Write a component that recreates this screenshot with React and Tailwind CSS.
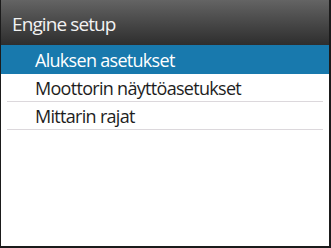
export default function App() {
  const items = ['Aluksen asetukset', 'Moottorin näyttöasetukset', 'Mittarin rajat'];

  return (
    <div className="w-[331px] h-[248px] bg-[#1b1b1b] pl-px pr-[2px] pb-[2px] font-['Open_Sans',sans-serif]">
      <div className="flex h-full flex-col bg-white">
        <div className="flex h-[45px] items-center bg-gradient-to-b from-[#646464] to-[#2e2e2e] pl-[11px] pt-[3px] text-[19px] font-medium tracking-[-0.9px] text-[#f2f2f2]">
          Engine setup
        </div>
        {items.map((label, i) => (
          <div key={label} className={i === 0 ? 'bg-[#1879ad]' : 'px-[6px]'}>
            <div
              className={
                i === 0
                  ? 'flex h-[29px] items-center pl-[34px] pt-[2px] text-[18px] font-medium tracking-[-0.7px] text-white'
                  : 'flex h-[28px] items-center border-b border-[#dcd8dc] pl-[28px] pt-[2px] text-[18px] font-medium tracking-[-0.7px] text-[#1e1e1e]'
              }
            >
              {label}
            </div>
          </div>
        ))}
      </div>
    </div>
  );
}
